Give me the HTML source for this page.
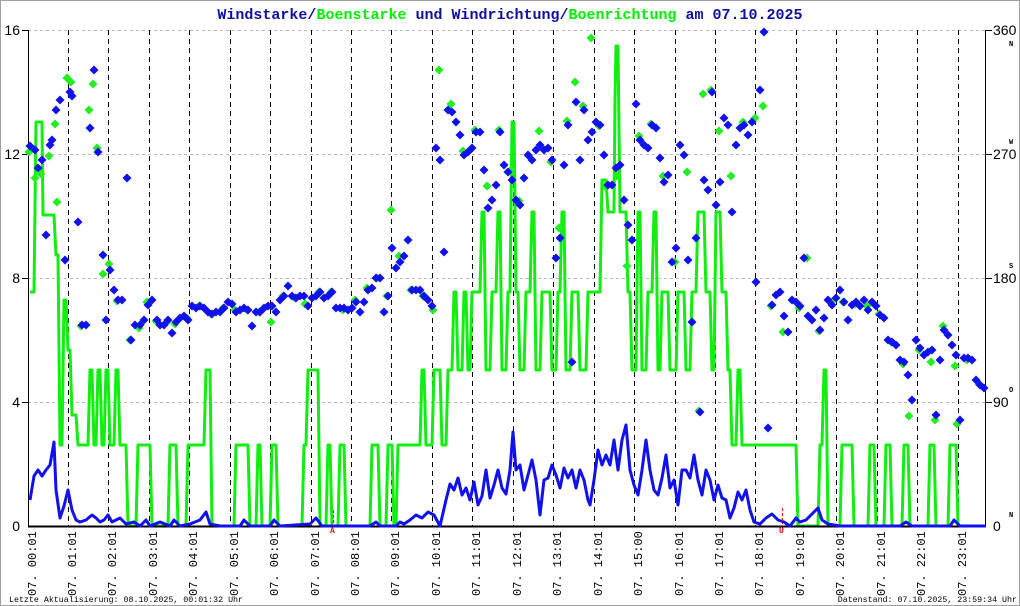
<!DOCTYPE html>
<html><head><meta charset="utf-8"><style>
body{margin:0;background:#fff}
svg{display:block}
</style></head><body>
<svg width="1020" height="606" viewBox="0 0 1020 606" xmlns="http://www.w3.org/2000/svg">
<rect x="0.5" y="0.5" width="1019" height="605" fill="#fff" stroke="#a0a0a0"/>
<defs><path id="d" d="M0,-4.5L4.5,0L0,4.5L-4.5,0Z"/></defs>
<g stroke="#bbb" stroke-dasharray="3,3" stroke-width="1">
<line x1="28" y1="30.5" x2="986" y2="30.5"/><line x1="28" y1="154.5" x2="986" y2="154.5"/><line x1="28" y1="278.5" x2="986" y2="278.5"/><line x1="28" y1="402.5" x2="986" y2="402.5"/>
</g>
<g stroke="#000" stroke-dasharray="5,4" stroke-width="1">
<line x1="68.5" y1="30" x2="68.5" y2="526"/><line x1="108.5" y1="30" x2="108.5" y2="526"/><line x1="149.5" y1="30" x2="149.5" y2="526"/><line x1="189.5" y1="30" x2="189.5" y2="526"/><line x1="230.5" y1="30" x2="230.5" y2="526"/><line x1="270.5" y1="30" x2="270.5" y2="526"/><line x1="311.5" y1="30" x2="311.5" y2="526"/><line x1="351.5" y1="30" x2="351.5" y2="526"/><line x1="391.5" y1="30" x2="391.5" y2="526"/><line x1="432.5" y1="30" x2="432.5" y2="526"/><line x1="472.5" y1="30" x2="472.5" y2="526"/><line x1="513.5" y1="30" x2="513.5" y2="526"/><line x1="553.5" y1="30" x2="553.5" y2="526"/><line x1="594.5" y1="30" x2="594.5" y2="526"/><line x1="634.5" y1="30" x2="634.5" y2="526"/><line x1="675.5" y1="30" x2="675.5" y2="526"/><line x1="715.5" y1="30" x2="715.5" y2="526"/><line x1="755.5" y1="30" x2="755.5" y2="526"/><line x1="796.5" y1="30" x2="796.5" y2="526"/><line x1="836.5" y1="30" x2="836.5" y2="526"/><line x1="877.5" y1="30" x2="877.5" y2="526"/><line x1="917.5" y1="30" x2="917.5" y2="526"/><line x1="958.5" y1="30" x2="958.5" y2="526"/>
</g>
<g stroke="#000"><line x1="28.5" y1="30" x2="28.5" y2="527"/><line x1="985.5" y1="30" x2="985.5" y2="527"/>
<line x1="22" y1="30.5" x2="28" y2="30.5"/><line x1="22" y1="154.5" x2="28" y2="154.5"/><line x1="22" y1="278.5" x2="28" y2="278.5"/><line x1="22" y1="402.5" x2="28" y2="402.5"/>
<line x1="986" y1="30.5" x2="992" y2="30.5"/><line x1="986" y1="154.5" x2="992" y2="154.5"/><line x1="986" y1="278.5" x2="992" y2="278.5"/><line x1="986" y1="402.5" x2="992" y2="402.5"/></g>

<polyline fill="none" stroke="#11ee11" stroke-width="3" stroke-linejoin="round" points="30,292 34,292 36,122 42,122 43,215 54,215 56,255 58,255 60,445 62,445 64,300 66,300 68,350 70,350 72,415 76,415 78,445 88,445 90,370 92,370 94,445 96,445 98,370 100,370 102,445 104,445 106,370 108,370 110,445 114,445 116,370 118,370 120,445 126,445 128,526 136,526 138,445 150,445 152,526 168,526 170,445 176,445 178,526 186,526 188,445 204,445 206,370 210,370 212,526 234,526 236,445 248,445 250,526 256,526 258,445 260,445 262,526 270,526 272,445 276,445 278,526 302,526 304,445 306,445 308,370 318,370 320,526 326,526 328,445 330,445 332,526 338,526 340,445 344,445 346,526 370,526 372,445 378,445 380,526 386,526 388,445 392,445 394,526 396,526 398,445 420,445 422,370 424,370 426,445 432,445 434,370 440,370 442,445 446,445 448,370 452,370 454,292 456,292 458,370 462,370 464,292 466,292 468,370 470,370 472,292 480,292 482,212 484,212 486,370 490,370 492,292 496,292 498,212 500,212 502,370 506,370 508,292 510,292 512,122 514,122 516,292 518,292 520,370 524,370 526,292 530,292 532,212 534,212 536,370 540,370 542,292 550,292 552,370 556,370 558,292 560,292 562,212 564,212 566,370 570,370 572,292 578,292 580,370 586,370 588,292 600,292 602,180 606,180 608,212 614,212 615,100 616,46 618,46 620,212 626,212 628,292 630,292 632,370 636,370 638,212 640,212 642,370 646,370 648,292 652,292 654,212 656,212 658,370 660,370 662,292 668,292 670,370 676,370 678,292 684,292 686,370 690,370 692,292 696,292 698,212 704,212 706,292 710,292 712,370 714,370 716,212 720,212 722,292 726,292 728,370 730,370 732,445 736,445 738,370 740,370 742,445 796,445 798,526 818,526 820,445 822,445 824,370 826,370 828,526 840,526 842,445 852,445 854,526 868,526 870,445 874,445 876,526 884,526 886,445 890,445 892,526 902,526 904,445 908,445 910,526 928,526 930,445 934,445 936,526 948,526 950,445 956,445 958,526 986,526"/>

<g fill="#22ee22" transform="translate(-1,6)">
<use href="#d" x="30" y="146"/><use href="#d" x="36" y="172"/><use href="#d" x="42" y="168"/><use href="#d" x="50" y="150"/><use href="#d" x="56" y="118"/><use href="#d" x="58" y="196"/><use href="#d" x="68" y="72"/><use href="#d" x="72" y="76"/><use href="#d" x="82" y="320"/><use href="#d" x="90" y="104"/><use href="#d" x="94" y="78"/><use href="#d" x="98" y="142"/><use href="#d" x="104" y="268"/><use href="#d" x="110" y="258"/><use href="#d" x="118" y="295"/><use href="#d" x="131" y="334"/><use href="#d" x="140" y="322"/><use href="#d" x="148" y="296"/><use href="#d" x="157" y="315"/><use href="#d" x="168" y="316"/><use href="#d" x="176" y="318"/><use href="#d" x="188" y="312"/><use href="#d" x="200" y="300"/><use href="#d" x="212" y="308"/><use href="#d" x="224" y="302"/><use href="#d" x="236" y="304"/><use href="#d" x="248" y="304"/><use href="#d" x="260" y="306"/><use href="#d" x="272" y="316"/><use href="#d" x="284" y="290"/><use href="#d" x="296" y="292"/><use href="#d" x="306" y="298"/><use href="#d" x="320" y="286"/><use href="#d" x="332" y="286"/><use href="#d" x="344" y="304"/><use href="#d" x="356" y="294"/><use href="#d" x="368" y="282"/><use href="#d" x="378" y="272"/><use href="#d" x="388" y="290"/><use href="#d" x="392" y="204"/><use href="#d" x="400" y="250"/><use href="#d" x="412" y="284"/><use href="#d" x="424" y="290"/><use href="#d" x="434" y="304"/><use href="#d" x="440" y="64"/><use href="#d" x="452" y="98"/><use href="#d" x="464" y="145"/><use href="#d" x="476" y="124"/><use href="#d" x="488" y="180"/><use href="#d" x="500" y="124"/><use href="#d" x="512" y="164"/><use href="#d" x="520" y="195"/><use href="#d" x="530" y="150"/><use href="#d" x="540" y="125"/><use href="#d" x="552" y="156"/><use href="#d" x="560" y="222"/><use href="#d" x="568" y="115"/><use href="#d" x="576" y="76"/><use href="#d" x="584" y="100"/><use href="#d" x="592" y="32"/><use href="#d" x="600" y="120"/><use href="#d" x="606" y="180"/><use href="#d" x="618" y="170"/><use href="#d" x="628" y="260"/><use href="#d" x="640" y="130"/><use href="#d" x="652" y="118"/><use href="#d" x="664" y="170"/><use href="#d" x="676" y="256"/><use href="#d" x="688" y="166"/><use href="#d" x="700" y="405"/><use href="#d" x="704" y="88"/><use href="#d" x="712" y="84"/><use href="#d" x="720" y="125"/><use href="#d" x="732" y="170"/><use href="#d" x="744" y="116"/><use href="#d" x="756" y="112"/><use href="#d" x="764" y="100"/><use href="#d" x="772" y="300"/><use href="#d" x="784" y="326"/><use href="#d" x="800" y="302"/><use href="#d" x="808" y="252"/><use href="#d" x="820" y="325"/><use href="#d" x="832" y="296"/><use href="#d" x="844" y="296"/><use href="#d" x="856" y="298"/><use href="#d" x="868" y="300"/><use href="#d" x="880" y="308"/><use href="#d" x="892" y="336"/><use href="#d" x="904" y="358"/><use href="#d" x="910" y="410"/><use href="#d" x="920" y="344"/><use href="#d" x="932" y="356"/><use href="#d" x="936" y="414"/><use href="#d" x="944" y="320"/><use href="#d" x="956" y="360"/><use href="#d" x="958" y="418"/><use href="#d" x="968" y="354"/><use href="#d" x="980" y="378"/>
</g>
<g fill="#1111ee">
<use href="#d" x="30" y="146"/><use href="#d" x="35" y="150"/><use href="#d" x="38" y="168"/><use href="#d" x="42" y="160"/><use href="#d" x="46" y="235"/><use href="#d" x="50" y="145"/><use href="#d" x="52" y="140"/><use href="#d" x="56" y="110"/><use href="#d" x="60" y="100"/><use href="#d" x="65" y="260"/><use href="#d" x="70" y="92"/><use href="#d" x="72" y="96"/><use href="#d" x="78" y="222"/><use href="#d" x="82" y="325"/><use href="#d" x="86" y="325"/><use href="#d" x="90" y="128"/><use href="#d" x="94" y="70"/><use href="#d" x="98" y="152"/><use href="#d" x="103" y="255"/><use href="#d" x="106" y="320"/><use href="#d" x="110" y="270"/><use href="#d" x="114" y="290"/><use href="#d" x="118" y="300"/><use href="#d" x="122" y="300"/><use href="#d" x="127" y="178"/><use href="#d" x="131" y="340"/><use href="#d" x="135" y="325"/><use href="#d" x="140" y="325"/><use href="#d" x="144" y="320"/><use href="#d" x="148" y="305"/><use href="#d" x="152" y="300"/><use href="#d" x="157" y="320"/><use href="#d" x="160" y="325"/><use href="#d" x="164" y="325"/><use href="#d" x="168" y="320"/><use href="#d" x="172" y="333"/><use href="#d" x="176" y="322"/><use href="#d" x="180" y="318"/><use href="#d" x="184" y="316"/><use href="#d" x="188" y="320"/><use href="#d" x="192" y="306"/><use href="#d" x="196" y="308"/><use href="#d" x="200" y="306"/><use href="#d" x="204" y="308"/><use href="#d" x="208" y="312"/><use href="#d" x="212" y="314"/><use href="#d" x="216" y="312"/><use href="#d" x="220" y="312"/><use href="#d" x="224" y="308"/><use href="#d" x="228" y="302"/><use href="#d" x="232" y="304"/><use href="#d" x="236" y="312"/><use href="#d" x="240" y="310"/><use href="#d" x="244" y="308"/><use href="#d" x="248" y="310"/><use href="#d" x="252" y="326"/><use href="#d" x="256" y="312"/><use href="#d" x="260" y="312"/><use href="#d" x="264" y="308"/><use href="#d" x="268" y="306"/><use href="#d" x="272" y="306"/><use href="#d" x="276" y="312"/><use href="#d" x="280" y="300"/><use href="#d" x="284" y="296"/><use href="#d" x="288" y="286"/><use href="#d" x="292" y="296"/><use href="#d" x="296" y="298"/><use href="#d" x="300" y="296"/><use href="#d" x="304" y="296"/><use href="#d" x="308" y="306"/><use href="#d" x="312" y="298"/><use href="#d" x="316" y="296"/><use href="#d" x="320" y="292"/><use href="#d" x="324" y="298"/><use href="#d" x="328" y="296"/><use href="#d" x="332" y="292"/><use href="#d" x="336" y="308"/><use href="#d" x="340" y="308"/><use href="#d" x="344" y="308"/><use href="#d" x="348" y="310"/><use href="#d" x="352" y="308"/><use href="#d" x="356" y="302"/><use href="#d" x="360" y="312"/><use href="#d" x="364" y="302"/><use href="#d" x="368" y="290"/><use href="#d" x="372" y="288"/><use href="#d" x="376" y="278"/><use href="#d" x="380" y="278"/><use href="#d" x="384" y="312"/><use href="#d" x="388" y="296"/><use href="#d" x="392" y="248"/><use href="#d" x="396" y="268"/><use href="#d" x="400" y="262"/><use href="#d" x="404" y="256"/><use href="#d" x="408" y="240"/><use href="#d" x="412" y="290"/><use href="#d" x="416" y="290"/><use href="#d" x="420" y="290"/><use href="#d" x="424" y="296"/><use href="#d" x="428" y="300"/><use href="#d" x="432" y="306"/><use href="#d" x="436" y="148"/><use href="#d" x="440" y="160"/><use href="#d" x="444" y="252"/><use href="#d" x="448" y="110"/><use href="#d" x="452" y="112"/><use href="#d" x="456" y="122"/><use href="#d" x="460" y="135"/><use href="#d" x="464" y="155"/><use href="#d" x="468" y="152"/><use href="#d" x="472" y="148"/><use href="#d" x="476" y="132"/><use href="#d" x="480" y="132"/><use href="#d" x="484" y="170"/><use href="#d" x="488" y="208"/><use href="#d" x="492" y="200"/><use href="#d" x="496" y="185"/><use href="#d" x="500" y="132"/><use href="#d" x="504" y="165"/><use href="#d" x="508" y="172"/><use href="#d" x="512" y="180"/><use href="#d" x="516" y="200"/><use href="#d" x="520" y="205"/><use href="#d" x="524" y="178"/><use href="#d" x="528" y="155"/><use href="#d" x="532" y="160"/><use href="#d" x="536" y="150"/><use href="#d" x="540" y="145"/><use href="#d" x="544" y="150"/><use href="#d" x="548" y="148"/><use href="#d" x="552" y="160"/><use href="#d" x="556" y="258"/><use href="#d" x="560" y="238"/><use href="#d" x="564" y="165"/><use href="#d" x="568" y="125"/><use href="#d" x="572" y="362"/><use href="#d" x="576" y="102"/><use href="#d" x="580" y="160"/><use href="#d" x="584" y="110"/><use href="#d" x="588" y="140"/><use href="#d" x="592" y="132"/><use href="#d" x="596" y="122"/><use href="#d" x="600" y="125"/><use href="#d" x="604" y="155"/><use href="#d" x="608" y="185"/><use href="#d" x="612" y="185"/><use href="#d" x="616" y="168"/><use href="#d" x="620" y="165"/><use href="#d" x="624" y="200"/><use href="#d" x="628" y="225"/><use href="#d" x="632" y="240"/><use href="#d" x="636" y="104"/><use href="#d" x="640" y="140"/><use href="#d" x="644" y="145"/><use href="#d" x="648" y="148"/><use href="#d" x="652" y="125"/><use href="#d" x="656" y="128"/><use href="#d" x="660" y="158"/><use href="#d" x="664" y="182"/><use href="#d" x="668" y="175"/><use href="#d" x="672" y="262"/><use href="#d" x="676" y="248"/><use href="#d" x="680" y="145"/><use href="#d" x="684" y="155"/><use href="#d" x="688" y="260"/><use href="#d" x="692" y="322"/><use href="#d" x="696" y="238"/><use href="#d" x="700" y="412"/><use href="#d" x="704" y="180"/><use href="#d" x="708" y="190"/><use href="#d" x="712" y="92"/><use href="#d" x="716" y="205"/><use href="#d" x="720" y="182"/><use href="#d" x="724" y="118"/><use href="#d" x="728" y="125"/><use href="#d" x="732" y="212"/><use href="#d" x="736" y="145"/><use href="#d" x="740" y="128"/><use href="#d" x="744" y="125"/><use href="#d" x="748" y="135"/><use href="#d" x="752" y="122"/><use href="#d" x="756" y="282"/><use href="#d" x="760" y="90"/><use href="#d" x="764" y="32"/><use href="#d" x="768" y="428"/><use href="#d" x="772" y="305"/><use href="#d" x="776" y="295"/><use href="#d" x="780" y="292"/><use href="#d" x="784" y="316"/><use href="#d" x="788" y="332"/><use href="#d" x="792" y="300"/><use href="#d" x="796" y="302"/><use href="#d" x="800" y="306"/><use href="#d" x="804" y="258"/><use href="#d" x="808" y="316"/><use href="#d" x="812" y="320"/><use href="#d" x="816" y="310"/><use href="#d" x="820" y="330"/><use href="#d" x="824" y="318"/><use href="#d" x="828" y="300"/><use href="#d" x="832" y="305"/><use href="#d" x="836" y="298"/><use href="#d" x="840" y="290"/><use href="#d" x="844" y="302"/><use href="#d" x="848" y="320"/><use href="#d" x="852" y="305"/><use href="#d" x="856" y="302"/><use href="#d" x="860" y="306"/><use href="#d" x="864" y="300"/><use href="#d" x="868" y="310"/><use href="#d" x="872" y="302"/><use href="#d" x="876" y="306"/><use href="#d" x="880" y="315"/><use href="#d" x="884" y="318"/><use href="#d" x="888" y="340"/><use href="#d" x="892" y="342"/><use href="#d" x="896" y="345"/><use href="#d" x="900" y="360"/><use href="#d" x="904" y="362"/><use href="#d" x="908" y="375"/><use href="#d" x="912" y="400"/><use href="#d" x="916" y="340"/><use href="#d" x="920" y="348"/><use href="#d" x="924" y="355"/><use href="#d" x="928" y="352"/><use href="#d" x="932" y="350"/><use href="#d" x="936" y="415"/><use href="#d" x="940" y="360"/><use href="#d" x="944" y="330"/><use href="#d" x="948" y="335"/><use href="#d" x="952" y="345"/><use href="#d" x="956" y="355"/><use href="#d" x="960" y="420"/><use href="#d" x="964" y="358"/><use href="#d" x="968" y="358"/><use href="#d" x="972" y="360"/><use href="#d" x="976" y="380"/><use href="#d" x="980" y="385"/><use href="#d" x="984" y="388"/>
</g>

<line x1="28" y1="526.5" x2="986" y2="526.5" stroke="#000" stroke-width="2"/>
<polyline fill="none" stroke="#1111ee" stroke-width="3" stroke-linejoin="round" points="30,500 34,476 38,470 42,476 46,470 50,465 54,442 56,490 60,518 64,506 68,490 72,510 76,520 80,522 86,520 92,515 96,518 100,522 104,520 108,515 112,522 120,518 126,524 134,522 140,526 146,520 150,526 160,522 170,526 174,520 180,526 190,524 200,520 206,512 210,524 220,526 240,526 244,520 250,526 270,526 274,520 280,526 310,524 316,518 322,526 370,526 376,522 380,526 396,526 400,522 404,524 410,520 416,515 422,518 428,512 434,515 440,526 446,500 450,484 454,490 458,478 462,495 466,488 470,500 474,482 478,505 482,496 486,470 490,498 494,485 498,470 502,488 506,494 510,470 513,432 516,470 520,465 524,490 528,475 532,460 536,480 540,515 544,480 548,478 552,465 556,475 560,488 564,468 568,478 572,470 576,488 580,470 584,480 588,500 590,505 594,480 598,450 602,465 606,455 610,465 614,440 618,470 622,440 626,425 630,470 634,485 638,495 642,470 646,440 650,470 654,490 658,495 662,478 666,455 670,488 674,480 678,505 682,470 686,470 690,478 694,455 698,480 702,495 706,470 710,480 714,500 718,485 722,498 726,500 730,518 734,508 738,492 742,500 746,490 750,510 754,522 760,524 766,518 772,514 778,520 784,522 790,526 796,518 800,522 806,520 812,514 818,508 822,520 828,524 840,526 900,526 906,522 912,526 950,526 954,520 960,526 986,526"/>

<g stroke="#e00" stroke-dasharray="3,2"><line x1="333.5" y1="510" x2="333.5" y2="526"/><line x1="782.5" y1="508" x2="782.5" y2="524"/></g>
<g fill="#e00" font-family="Liberation Mono, monospace" font-size="8" font-weight="bold"><text x="330" y="533">A</text><text x="779" y="533">U</text></g>

<text x="510" y="19" text-anchor="middle" font-family="Liberation Mono, monospace" font-size="15" font-weight="bold" fill="#1010a0">Windstarke/<tspan fill="#00ee00">Boenstarke</tspan> und Windrichtung/<tspan fill="#00ee00">Boenrichtung</tspan> am 07.10.2025</text>

<g font-family="Liberation Sans, sans-serif" font-size="14" fill="#000">
<text x="20" y="35" text-anchor="end">16</text><text x="20" y="159" text-anchor="end">12</text><text x="20" y="283" text-anchor="end">8</text><text x="20" y="407" text-anchor="end">4</text><text x="20" y="531" text-anchor="end">0</text>
<text x="993" y="35">360</text><text x="993" y="159">270</text><text x="993" y="283">180</text><text x="993" y="407">90</text><text x="993" y="531">0</text>
</g>
<g font-family="Liberation Mono, monospace" font-size="7" font-weight="bold" fill="#000">
<text x="1009" y="46">N</text><text x="1009" y="144">W</text><text x="1009" y="268">S</text><text x="1009" y="392">O</text><text x="1009" y="517">N</text>
</g>

<g font-family="Liberation Mono, monospace" font-size="12" fill="#000">
<text transform="translate(36,596) rotate(-90)">07. 00:01</text>
<text transform="translate(76,596) rotate(-90)">07. 01:01</text>
<text transform="translate(116,596) rotate(-90)">07. 02:01</text>
<text transform="translate(157,596) rotate(-90)">07. 03:01</text>
<text transform="translate(197,596) rotate(-90)">07. 04:01</text>
<text transform="translate(238,596) rotate(-90)">07. 05:01</text>
<text transform="translate(278,596) rotate(-90)">07. 06:01</text>
<text transform="translate(319,596) rotate(-90)">07. 07:01</text>
<text transform="translate(359,596) rotate(-90)">07. 08:01</text>
<text transform="translate(399,596) rotate(-90)">07. 09:01</text>
<text transform="translate(440,596) rotate(-90)">07. 10:01</text>
<text transform="translate(480,596) rotate(-90)">07. 11:01</text>
<text transform="translate(521,596) rotate(-90)">07. 12:01</text>
<text transform="translate(561,596) rotate(-90)">07. 13:01</text>
<text transform="translate(602,596) rotate(-90)">07. 14:01</text>
<text transform="translate(642,596) rotate(-90)">07. 15:00</text>
<text transform="translate(683,596) rotate(-90)">07. 16:01</text>
<text transform="translate(723,596) rotate(-90)">07. 17:01</text>
<text transform="translate(763,596) rotate(-90)">07. 18:01</text>
<text transform="translate(804,596) rotate(-90)">07. 19:01</text>
<text transform="translate(844,596) rotate(-90)">07. 20:01</text>
<text transform="translate(885,596) rotate(-90)">07. 21:01</text>
<text transform="translate(925,596) rotate(-90)">07. 22:01</text>
<text transform="translate(966,596) rotate(-90)">07. 23:01</text>
</g>
<g font-family="Liberation Mono, monospace" font-size="8.3" fill="#000">
<text x="9" y="602">Letzte Aktualisierung: 08.10.2025, 00:01:32 Uhr</text>
<text x="1017" y="602" text-anchor="end">Datenstand: 07.10.2025, 23:59:34 Uhr</text>
</g>
</svg>
</body></html>
